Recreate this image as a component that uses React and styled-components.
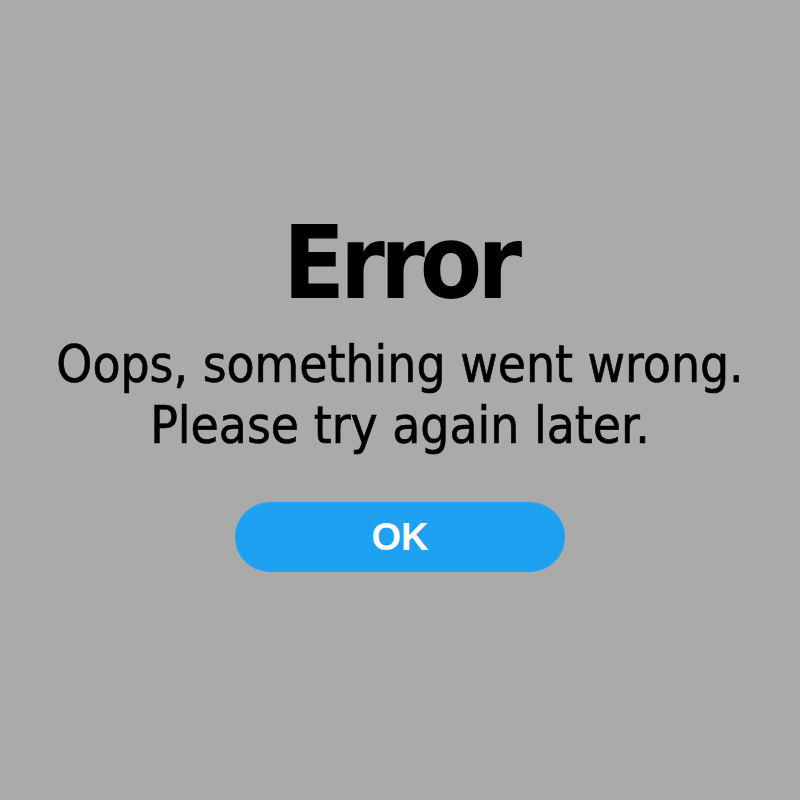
import React from "react";
import styled, { createGlobalStyle } from "styled-components";

const GlobalStyle = createGlobalStyle`
  html, body {
    margin: 0;
    padding: 0;
    background: #aaaaaa;
  }
`;

const Screen = styled.div`
  width: 800px;
  height: 800px;
  display: flex;
  flex-direction: column;
  align-items: center;
  padding-top: 208px;
  box-sizing: border-box;
  font-family: "DejaVu Sans Condensed", "DejaVu Sans", sans-serif;
  color: #000;
`;

const Title = styled.h1`
  margin: 0;
  font-size: 101px;
  font-weight: 700;
  line-height: 110px;
  letter-spacing: -5px;
`;

const Message = styled.p`
  margin: 16px 0 0;
  font-size: 51px;
  line-height: 61px;
  text-align: center;
  -webkit-text-stroke: 0.6px #000;
`;

const OkButton = styled.button`
  margin-top: 46px;
  width: 330px;
  height: 70px;
  border: none;
  border-radius: 35px;
  background: #1ea1f1;
  color: #fff;
  font-family: "Liberation Sans", Arial, sans-serif;
  font-weight: 700;
  font-size: 38px;
  cursor: pointer;
`;

export default function App() {
  return (
    <>
      <GlobalStyle />
      <Screen>
        <Title>Error</Title>
        <Message>
          Oops, something went wrong.
          <br />
          Please try again later.
        </Message>
        <OkButton>OK</OkButton>
      </Screen>
    </>
  );
}
